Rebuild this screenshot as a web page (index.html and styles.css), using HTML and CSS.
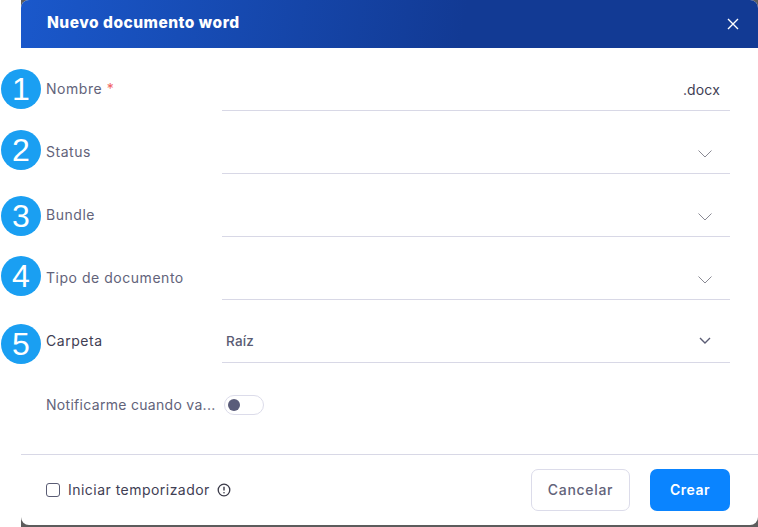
FILE: index.html
```html
<!DOCTYPE html>
<html lang="es">
<head>
<meta charset="utf-8">
<title>Nuevo documento word</title>
<link rel="stylesheet" href="styles.css">
</head>
<body>
<div class="backdrop">
  <div class="dialog">
    <header class="head">
      <h1 class="title">Nuevo documento word</h1>
      <svg class="close" viewBox="0 0 12 12" width="12" height="12"><path d="M1 1l10 10M11 1L1 11" stroke="#fff" stroke-width="1.4" fill="none"/></svg>
    </header>
    <div class="body">
      <div class="row">
        <label class="label">Nombre <span class="req">*</span></label>
        <div class="field end"><span class="ext">.docx</span></div>
      </div>
      <div class="row">
        <label class="label">Status</label>
        <div class="field end"><svg class="chev" viewBox="0 0 14 8" width="14" height="8"><path d="M.5.5L7 7l6.500-6.500" stroke="#8a8a94" fill="none"/></svg></div>
      </div>
      <div class="row">
        <label class="label">Bundle</label>
        <div class="field end"><svg class="chev" viewBox="0 0 14 8" width="14" height="8"><path d="M.5.5L7 7l6.500-6.500" stroke="#8a8a94" fill="none"/></svg></div>
      </div>
      <div class="row">
        <label class="label">Tipo de documento</label>
        <div class="field end"><svg class="chev" viewBox="0 0 14 8" width="14" height="8"><path d="M.5.5L7 7l6.500-6.500" stroke="#8a8a94" fill="none"/></svg></div>
      </div>
      <div class="row">
        <label class="label dark">Carpeta</label>
        <div class="field between"><span class="value">Raíz</span><svg class="chev small" viewBox="0 0 12 7" width="12" height="7"><path d="M1 1l5 5 5-5" stroke="#5a5c74" stroke-width="1.4" fill="none"/></svg></div>
      </div>
      <div class="row toggle-row">
        <label class="label">Notificarme cuando va...</label>
        <div class="toggle"><span class="knob"></span></div>
      </div>
    </div>
    <footer class="foot">
      <div class="timer">
        <span class="check"></span>
        <span class="timer-text">Iniciar temporizador</span>
        <svg class="info" viewBox="0 0 14 14" width="14" height="14"><circle cx="7" cy="7" r="5.800" stroke="#3a3a48" stroke-width="1.300" fill="none"/><path d="M7 3.800v3.600" stroke="#3a3a48" stroke-width="1.400"/><circle cx="7" cy="9.800" r=".8" fill="#3a3a48"/></svg>
      </div>
      <div class="actions">
        <button class="btn ghost">Cancelar</button>
        <button class="btn primary">Crear</button>
      </div>
    </footer>
  </div>
</div>
<span class="badge b1">1</span>
<span class="badge b2">2</span>
<span class="badge b3">3</span>
<span class="badge b4">4</span>
<span class="badge b5">5</span>
</body>
</html>
```
FILE: styles.css
```css
* { box-sizing: border-box; }
html, body { margin: 0; height: 100%; background: #fff; overflow: hidden; }
body { position: relative; width: 758px; height: 527px; font-family: "Inter", "Liberation Sans", sans-serif; }
.backdrop { margin-left: 21px; height: 527px; background: #5c5c5c; }
.dialog { width: 737px; height: 525px; background: #fff; border-radius: 8px; overflow: hidden; display: flex; flex-direction: column; }
.head { height: 48px; flex: none; display: flex; align-items: center; justify-content: space-between; padding: 0 19px 3px 26px; background: linear-gradient(100deg, #1a58cb 0%, #123a94 60%, #123a94 100%); }
.title { margin: 0; font-size: 15.500px; font-weight: 800; color: #fff; letter-spacing: .5px; }
.close { display: block; margin-top: 3px; }
.body { flex: 1; display: flex; flex-direction: column; }
.row { height: 63px; flex: none; display: flex; padding: 0 28px 0 25px; }
.label { width: 176px; flex: none; font-size: 14px; color: #62637a; line-height: 20px; padding-top: 31px; letter-spacing: .53px; white-space: nowrap; }
.label.dark { color: #3f4054; }
.req { color: #f1635f; }
.field { flex: 1; border-bottom: 1px solid #d8d8e6; display: flex; align-items: center; height: 63px; padding-top: 21px; }
.end { justify-content: flex-end; padding-right: 10px; }
.between { justify-content: space-between; padding: 19px 19px 0 4px; }
.ext { font-size: 14px; color: #3f4054; letter-spacing: .15px; }
.value { font-size: 13.500px; font-weight: 500; color: #5a5c74; letter-spacing: .2px; }
.chev { display: block; margin-top: 2px; margin-right: 8px; }
.chev.small { margin-right: 0; margin-top: 0; }
.toggle-row { height: 84px; align-items: center; padding-top: 0; }
.toggle-row .label { padding-top: 0; letter-spacing: .3px; }
.toggle { width: 40px; height: 20px; border: 1px solid #dcdcea; border-radius: 10px; display: flex; align-items: center; padding-left: 3px; margin-left: 2px; }
.knob { width: 12px; height: 12px; border-radius: 50%; background: #5a5c7a; }
.foot { height: 71px; flex: none; margin-top: auto; border-top: 1px solid #d8d8e6; display: flex; align-items: center; justify-content: space-between; padding: 0 28px 0 25px; }
.timer { display: flex; align-items: center; }
.check { width: 14px; height: 14px; border: 1px solid #5a5c74; border-radius: 3px; margin-top: -1px; }
.timer-text { font-size: 14px; color: #3f4054; margin: -2px 0 0 8px; letter-spacing: .47px; }
.info { margin: -1px 0 0 7px; display: block; }
.actions { display: flex; gap: 20px; }
.btn { height: 42px; border-radius: 7px; font-family: inherit; font-size: 14px; font-weight: 500; letter-spacing: .7px; padding: 0 0 2px; }
.ghost { width: 99px; background: #fff; border: 1px solid #dcdcea; color: #62637a; }
.primary { width: 80px; background: #0a84ff; border: 0; color: #fff; font-weight: 600; letter-spacing: .5px; }
.badge { position: absolute; left: 1px; width: 40px; height: 40px; border-radius: 50%; background: #1a9ff2; color: #fff; font-family: "Liberation Sans", sans-serif; font-size: 32px; line-height: 40px; text-align: center; }
.b1 { top: 69px; }
.b2 { top: 130px; }
.b3 { top: 196px; }
.b4 { top: 256px; }
.b5 { top: 324px; }
```
